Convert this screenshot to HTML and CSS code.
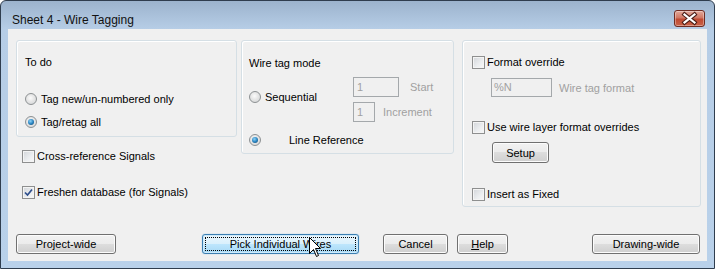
FILE: index.html
```html
<!DOCTYPE html>
<html lang="en">
<head>
    <meta charset="UTF-8">
    <title>Sheet 4 - Wire Tagging</title>
    <link rel="stylesheet" href="styles.css">
</head>
<body>
    <div class="window">
        <div class="titlebar">
            <span class="title">Sheet 4 - Wire Tagging</span>
            <div class="close">
                <svg width="29" height="15" viewBox="0 0 29 15">
                    <path d="M9.5 3.5 L19.5 11.5 M19.5 3.5 L9.5 11.5" stroke="#4a1d16" stroke-width="4.2" stroke-linecap="square"/>
                    <path d="M9.5 3.5 L19.5 11.5 M19.5 3.5 L9.5 11.5" stroke="#fff" stroke-width="2.2" stroke-linecap="square"/>
                </svg>
            </div>
        </div>

        <div class="client">
            <div class="panels">
                <div class="col-left">
                    <div class="group todo">
                        <div class="line">To do</div>
                        <div class="line opt r1"><span class="radio"></span>Tag new/un-numbered only</div>
                        <div class="line opt r2"><span class="radio on"></span>Tag/retag all</div>
                    </div>
                    <div class="line check c1"><span class="box"></span>Cross-reference Signals</div>
                    <div class="line check c2">
                        <span class="box">
                            <svg width="11" height="11" viewBox="0 0 11 11"><path d="M2 5.5 L4.5 8 L9 2.5" fill="none" stroke="#2e4e8c" stroke-width="1.7"/></svg>
                        </span>Freshen database (for Signals)
                    </div>
                </div>

                <div class="group mode">
                    <div class="line">Wire tag mode</div>
                    <div class="seq">
                        <div class="line opt seq-opt"><span class="radio"></span>Sequential</div>
                        <div class="nums">
                            <div class="num-row">
                                <div class="field start">1</div>
                                <span class="dim start-lbl">Start</span>
                            </div>
                            <div class="num-row">
                                <div class="field inc">1</div>
                                <span class="dim inc-lbl">Increment</span>
                            </div>
                        </div>
                    </div>
                    <div class="line opt lineref"><span class="radio on"></span><span class="lineref-txt">Line Reference</span></div>
                </div>

                <div class="group format">
                    <div class="line check"><span class="box"></span>Format override</div>
                    <div class="fmt-row">
                        <div class="field fmt">%N</div>
                        <span class="dim fmt-lbl">Wire tag format</span>
                    </div>
                    <div class="line check layer"><span class="box"></span>Use wire layer format overrides</div>
                    <button class="btn setup">Setup</button>
                    <div class="line check fixed"><span class="box"></span>Insert as Fixed</div>
                </div>
            </div>

            <div class="buttons">
                <button class="btn project">Project-wide</button>
                <button class="btn pick focus"><span class="focus-ring">Pick Individual Wires</span></button>
                <button class="btn cancel">Cancel</button>
                <button class="btn help"><u>H</u>elp</button>
                <button class="btn drawing">Drawing-wide</button>
            </div>

            <svg class="cursor" width="13" height="21" viewBox="0 0 13 21">
                <path d="M0.5 0.5 L0.5 16.5 L4.5 12.5 L7.5 19.5 L9.5 18.5 L6.5 11.5 L11.5 11.5 Z" fill="#fff" stroke="#000" stroke-width="1"/>
            </svg>
        </div>
    </div>
</body>
</html>
```

FILE: styles.css
```css
*{
    margin: 0;
    padding: 0;
    box-sizing: border-box;
}
body{
    background: #fff;
    font-family: "Liberation Sans", Arial, sans-serif;
    font-size: 11px;
    color: #000;
}
.window{
    width: 715px;
    height: 269px;
    border: 1px solid #2f3d4e;
    border-radius: 6px 6px 0 0;
    background: linear-gradient(to bottom, #9cb3cd 0, #b6cde6 28px, #b9d1ea 100%);
    display: flex;
    flex-direction: column;
}
.titlebar{
    height: 28px;
    display: flex;
    align-items: flex-start;
}
.title{
    font-size: 12px;
    line-height: 16px;
    padding: 11px 0 0 11px;
    color: #111;
}
.close{
    margin: 9px 9px 0 auto;
    width: 31px;
    height: 17px;
    border: 1px solid #6e2c22;
    border-radius: 3px;
    background: linear-gradient(to bottom, #e2a99b 0, #d07764 45%, #c04a32 55%, #c9634a 100%);
    box-shadow: inset 0 0 0 1px rgba(255,255,255,0.35);
    display: flex;
}
.client{
    margin: 0 7px;
    height: 232px;
    background: #f0f0f0;
    padding: 11px 0 0 8px;
    position: relative;
}
.panels{
    display: flex;
    align-items: flex-start;
    height: 167px;
}
.group{
    border: 1px solid #d5dfe5;
    border-radius: 3px;
    box-shadow: inset 1px 1px 0 #fff;
}
.line{
    height: 16px;
    line-height: 16px;
    display: flex;
    align-items: center;
    white-space: nowrap;
}

/* left column */
.col-left{
    width: 221px;
}
.todo{
    height: 97px;
    padding: 13px 0 0 8px;
}
.r1{ margin-top: 21px; }
.r2{ margin-top: 7px; }
.c1{ margin: 11px 0 0 6px; }
.c2{ margin: 20px 0 0 6px; }

/* radios & checkboxes */
.radio{
    width: 12px;
    height: 12px;
    border-radius: 50%;
    border: 1px solid #8d9193;
    background: radial-gradient(circle at 45% 40%, #fbfbfb 0, #e6e6e6 45%, #cfd2d4 100%);
    margin-right: 4px;
    position: relative;
    flex: none;
}
.radio.on::after{
    content: "";
    position: absolute;
    left: 2px;
    top: 2px;
    width: 6px;
    height: 6px;
    border-radius: 50%;
    background: radial-gradient(circle at 40% 35%, #8fd3f7 0, #2b86c3 50%, #103d63 100%);
}
.box{
    width: 13px;
    height: 13px;
    border: 1px solid #8e8f8f;
    background: linear-gradient(135deg, #d2d5d9 0, #eceef0 60%, #f8f8f8 100%);
    box-shadow: inset 0 0 0 1px #f4f4f4;
    margin-right: 2px;
    display: flex;
    align-items: center;
    justify-content: center;
    flex: none;
}

/* wire tag mode */
.mode{
    width: 213px;
    height: 114px;
    margin-left: 4px;
    padding: 14px 0 0 7px;
}
.seq{
    display: flex;
    margin-top: 6px;
}
.seq-opt{
    width: 104px;
    align-self: center;
    margin-bottom: 5px;
}
.nums{
    display: flex;
    flex-direction: column;
    gap: 5px;
}
.num-row, .fmt-row{
    display: flex;
    align-items: center;
}
.field{
    height: 20px;
    border: 1px solid #a4a8ab;
    color: #a0a0a0;
    line-height: 18px;
    padding-left: 3px;
    background: #f0f0f0;
}
.start{ width: 46px; }
.inc{ width: 22px; }
.dim{
    color: #a0a0a0;
}
.start-lbl{ margin-left: 11px; }
.inc-lbl{ margin-left: 8px; }
.lineref{ margin-top: 10px; }
.lineref-txt{ margin-left: 24px; }

/* format */
.format{
    width: 239px;
    height: 167px;
    margin-left: 8px;
    padding: 13px 0 0 9px;
}
.fmt-row{
    margin: 8px 0 0 19px;
}
.fmt{
    width: 61px;
    height: 19px;
    line-height: 17px;
    padding-left: 2px;
}
.fmt-lbl{ margin-left: 7px; }
.layer{ margin-top: 22px; }
.fixed{ margin-top: 23px; }

/* buttons */
.btn{
    display: block;
    height: 20px;
    border: 1px solid #707070;
    border-radius: 3px;
    background: linear-gradient(to bottom, #f2f2f2 0, #ebebeb 50%, #dddddd 50%, #cfcfcf 100%);
    box-shadow: inset 0 0 0 1px #fcfcfc;
    font-family: "Liberation Sans", Arial, sans-serif;
    font-size: 11px;
    color: #000;
    text-align: center;
}
.setup{
    width: 57px;
    height: 21px;
    margin: 7px 0 0 20px;
}
.buttons{
    display: flex;
    margin-top: 27px;
}
.project{ width: 100px; }
.pick{ width: 157px; margin-left: 86px; }
.cancel{ width: 65px; margin-left: 24px; }
.help{ width: 51px; margin-left: 9px; }
.drawing{ width: 108px; margin-left: 84px; }
.focus{
    border-color: #3c7fb1;
    background: linear-gradient(to bottom, #eaf6fd 0, #d9f0fc 50%, #bee6fd 50%, #a7d9f5 100%);
    box-shadow: inset 0 0 0 1px #cde9fa, 0 0 1px #5aaae6;
    padding: 2px;
}
.focus-ring{
    display: block;
    height: 14px;
    line-height: 12px;
    border: 1px dotted #000;
}
.cursor{
    position: absolute;
    left: 301px;
    top: 208px;
}
```
